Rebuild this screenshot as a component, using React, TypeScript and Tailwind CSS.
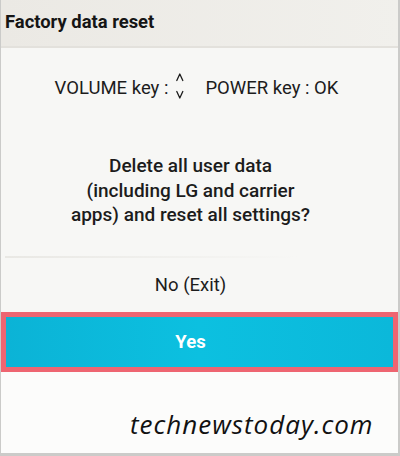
const roboto = { fontFamily: "Roboto, 'Noto Sans', sans-serif" };

// up/down volume carets drawn as one small icon
function VolumeArrows() {
  return (
    <svg width="8" height="26" viewBox="0 0 8 26" className="ml-[8px] -mt-[4px] shrink-0" fill="none" stroke="#1c1c1c" strokeWidth="1.3" strokeLinecap="round" strokeLinejoin="round">
      <polyline points="0.8,7.5 3.8,1 6.8,7.5" />
      <polyline points="0.8,18.5 3.8,25 6.8,18.5" />
    </svg>
  );
}

export default function App() {
  return (
    <div
      className="w-[400px] h-[456px] flex flex-col overflow-hidden bg-[#f7f7f5] border-l border-r-2 border-b-[3px] border-[#cbcbc9] text-[#1c1c1c]"
      style={roboto}
    >
      {/* title bar */}
      <div className="h-[46px] shrink-0 bg-gradient-to-r from-[#ebe9e4] to-[#f1f0ec] pl-[4px] pt-[12px]">
        <h1 className="text-[18.4px] leading-[20px] font-bold text-[#151515]">Factory data reset</h1>
      </div>
      <div className="h-[2px] shrink-0 bg-[#e3e1dc]" />

      {/* key hint */}
      <div className="mt-[29px] h-[22px] flex items-start justify-center pr-[6px] text-[18.5px] leading-[22px]">
        <span>VOLUME key :</span>
        <VolumeArrows />
        <span className="ml-[21px]">POWER key : OK</span>
      </div>

      {/* prompt */}
      <p className="mt-[55px] pr-[18px] text-center text-[19px] leading-[24.5px] font-medium">
        Delete all user data
        <br />
        (including LG and carrier
        <br />
        apps) and reset all settings?
      </p>

      <div className="mt-[28px] ml-[4px] mr-[100px] h-[2px] shrink-0 bg-gradient-to-r from-[#e9e8e4] to-[#f7f7f5]" />

      {/* options */}
      <div className="mt-[16px] pr-[18px] text-center text-[18.5px] leading-[22px]">No (Exit)</div>

      <div className="mt-[16px] h-[60px] shrink-0 border-[5px] border-[#ee6571] bg-gradient-to-r from-[#0bb3d6] via-[#0cc0e0] to-[#0bb8da] flex items-center justify-center pr-[18px]">
        <span className="text-[18.5px] leading-[22px] font-bold text-white">Yes</span>
      </div>

      <div className="flex-1 bg-[#fcfcfb] pl-[129px] pt-[37px]">
        <span
          className="text-[26px] leading-[30px] italic tracking-[1px] text-[#111]"
          style={{ fontFamily: "'Open Sans', sans-serif" }}
        >
          technewstoday.com
        </span>
      </div>
    </div>
  );
}
